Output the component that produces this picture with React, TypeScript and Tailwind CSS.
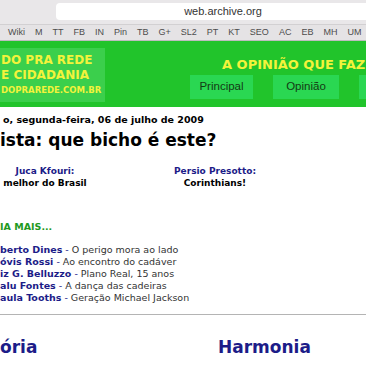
const bookmarks = ["Wiki", "M", "TT", "FB", "IN", "Pin", "TB", "G+", "SL2", "PT", "KT", "SEO", "AC", "EB", "MH", "UM"];

// articles list ("leia mais")
const outros = [
  ["berto Dines", "O perigo mora ao lado"],
  ["óvis Rossi", "Ao encontro do cadáver"],
  ["iz G. Belluzzo", "Plano Real, 15 anos"],
  ["alu Fontes", "A dança das cadeiras"],
  ["aula Tooths", "Geração Michael Jackson"],
];

export default function App() {
  return (
    <div className="w-[366px] h-[366px] overflow-hidden bg-white">
      {/* browser toolbar */}
      <div className="h-[24px] bg-[#e9e7e9] flex items-start pt-[3px] pl-[56px] overflow-hidden">
        <div className="w-[334px] shrink-0 h-[17px] bg-white rounded-[4px] flex items-center justify-center text-[11px] text-[#333] font-['Liberation_Sans',sans-serif]">
          web.archive.org
        </div>
      </div>
      <div className="h-[17px] border-t border-[#d2d0d2] border-b border-b-[#bebcbe] bg-[#e5e3e5] flex items-center gap-[10px] pl-[8px] text-[9px] text-[#4d4d4d] font-['Liberation_Sans',sans-serif] whitespace-nowrap overflow-hidden">
        {bookmarks.map((b) => (
          <span key={b}>{b}</span>
        ))}
      </div>

      {/* site banner */}
      <div className="h-[66px] bg-[#21c42b] flex overflow-hidden font-['DejaVu_Sans',sans-serif] font-bold text-[#f3f33b]">
        <div className="mt-[7px] h-[54px] w-[105px] shrink-0 bg-[#3bcf4c] flex flex-col justify-center pl-[1px] overflow-hidden whitespace-nowrap">
          <div className="text-[12px] leading-[15px]">DO PRA REDE</div>
          <div className="text-[12px] leading-[15px]">E CIDADANIA</div>
          <div className="text-[8.5px] leading-[15px]">DOPRAREDE.COM.BR</div>
        </div>
        <div className="ml-[85px] flex flex-col shrink-0">
          <div className="mt-[16px] h-[16px] leading-[16px] pl-[32px] text-[13px] whitespace-nowrap">A OPINIÃO QUE FAZ</div>
          <div className="mt-[2px] flex gap-[20px] font-['Liberation_Sans',sans-serif] font-normal text-[11.5px] text-[#143a14]">
            <div className="h-[24px] w-[63px] bg-[#2ad752] flex items-center justify-center">Principal</div>
            <div className="h-[24px] w-[66px] bg-[#2ad752] flex items-center justify-center">Opinião</div>
            <div className="h-[24px] w-[66px] bg-[#2ad752]"></div>
          </div>
        </div>
      </div>

      {/* content */}
      <div className="font-['DejaVu_Sans',sans-serif] text-black whitespace-nowrap">
        <div className="mt-[7px] pl-[3px] text-[9.5px] leading-[12px] font-bold">o, segunda-feira, 06 de julho de 2009</div>
        <div className="mt-[4px] text-[17px] leading-[20px] font-bold">ista: que bicho é este?</div>

        <div className="mt-[15px] flex text-[9px] leading-[12px] font-bold">
          <div className="w-[90px] text-center">
            <div className="text-[#1c1c88]">Juca Kfouri:</div>
            <div>melhor do Brasil</div>
          </div>
          <div className="ml-[70px] w-[110px] text-center">
            <div className="text-[#1c1c88]">Persio Presotto:</div>
            <div>Corinthians!</div>
          </div>
        </div>

        <div className="mt-[32px] text-[9.5px] leading-[12px] font-bold text-[#1f9a1f]">IA MAIS...</div>

        <div className="mt-[11px] text-[9.5px] leading-[12px]">
          {outros.map(([autor, titulo]) => (
            <div key={autor}>
              <span className="font-bold text-[#1c1c88]">{autor}</span>
              <span className="text-[#1c1c88]"> - </span>
              <span className="text-[#333]">{titulo}</span>
            </div>
          ))}
        </div>

        <div className="mt-[10px] border-t border-[#b4b4b4]"></div>

        <div className="mt-[22px] flex text-[17px] leading-[20px] font-bold text-[#1c1c88]">
          <div className="w-[218px]">ória</div>
          <div>Harmonia</div>
        </div>
      </div>
    </div>
  );
}
